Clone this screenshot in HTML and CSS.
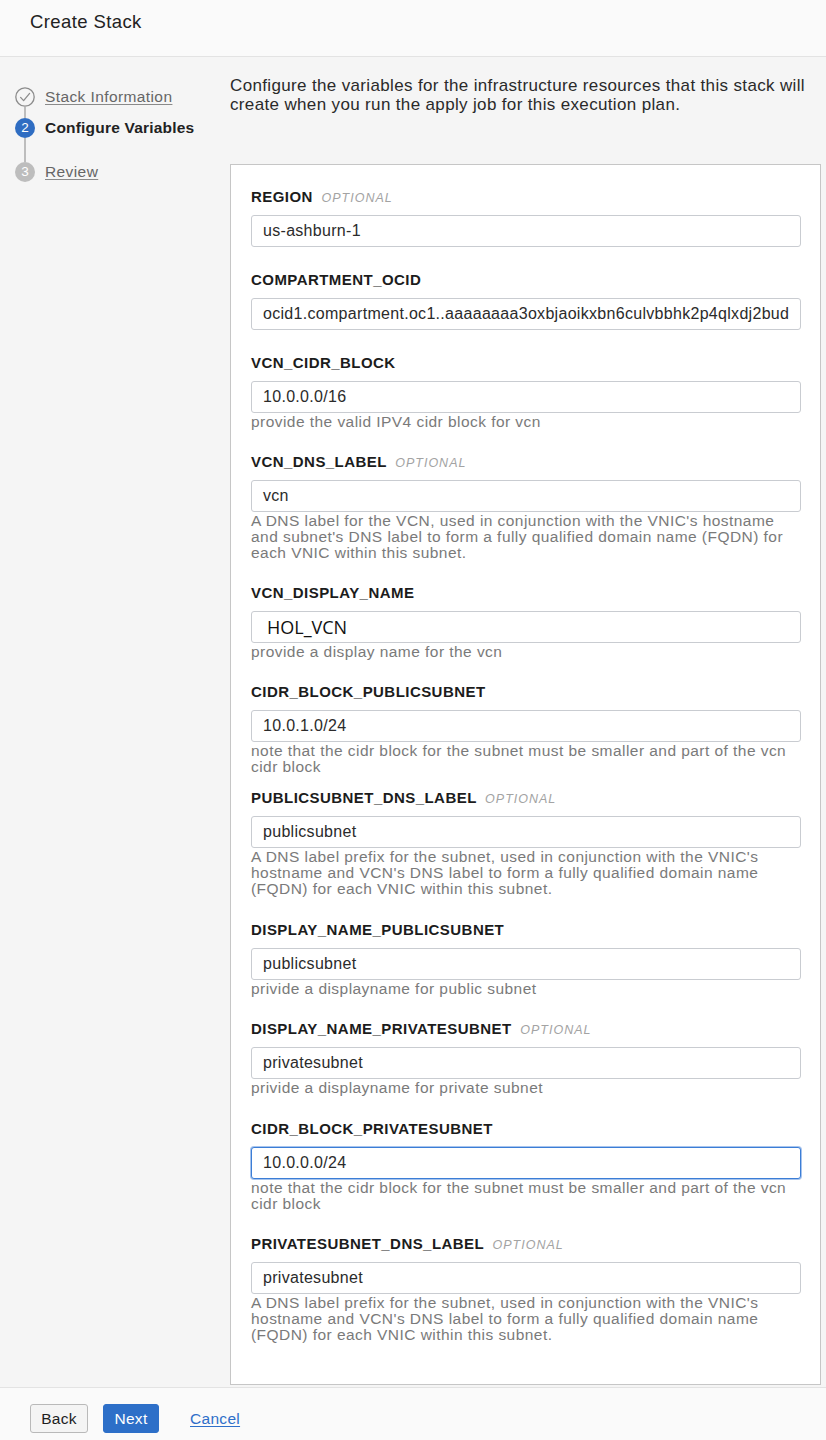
FILE: index.html
```html
<!DOCTYPE html>
<html lang="en">
<head>
<meta charset="utf-8">
<title>Create Stack</title>
<link rel="stylesheet" href="styles.css">
</head>
<body>
<header class="topbar">
  <h1 class="title">Create Stack</h1>
</header>
<div class="layout">
  <nav class="steps">
    <div class="step">
      <svg class="step-icon" viewBox="0 0 20 20" width="20" height="20" aria-hidden="true">
        <circle cx="10" cy="10" r="9.2" fill="none" stroke="#8c8c8c" stroke-width="1.3"/>
        <path d="M5.6 10.4 L8.6 13.6 L14.6 6.4" fill="none" stroke="#8c8c8c" stroke-width="1.3" stroke-linecap="round" stroke-linejoin="round"/>
      </svg>
      <a class="step-link" href="#">Stack Information</a>
    </div>
    <div class="connector short"></div>
    <div class="step">
      <span class="step-num current">2</span>
      <span class="step-current">Configure Variables</span>
    </div>
    <div class="connector long"></div>
    <div class="step">
      <span class="step-num todo">3</span>
      <a class="step-link" href="#">Review</a>
    </div>
  </nav>
  <main class="content">
    <p class="intro">Configure the variables for the infrastructure resources that this stack will create when you run the apply job for this execution plan.</p>
    <section class="panel">
      <div class="field">
        <div class="label">REGION <span class="optional">OPTIONAL</span></div>
        <div class="input">us-ashburn-1</div>
      </div>
      <div class="field">
        <div class="label">COMPARTMENT_OCID</div>
        <div class="input">ocid1.compartment.oc1..aaaaaaaa3oxbjaoikxbn6culvbbhk2p4qlxdj2bud</div>
      </div>
      <div class="field has-help">
        <div class="label">VCN_CIDR_BLOCK</div>
        <div class="input">10.0.0.0/16</div>
        <p class="help">provide the valid IPV4 cidr block for vcn</p>
      </div>
      <div class="field has-help">
        <div class="label">VCN_DNS_LABEL <span class="optional">OPTIONAL</span></div>
        <div class="input">vcn</div>
        <p class="help">A DNS label for the VCN, used in conjunction with the VNIC's hostname and subnet's DNS label to form a fully qualified domain name (FQDN) for each VNIC within this subnet.</p>
      </div>
      <div class="field has-help">
        <div class="label">VCN_DISPLAY_NAME</div>
        <div class="input pasted">HOL_VCN</div>
        <p class="help">provide a display name for the vcn</p>
      </div>
      <div class="field has-help tight">
        <div class="label">CIDR_BLOCK_PUBLICSUBNET</div>
        <div class="input">10.0.1.0/24</div>
        <p class="help">note that the cidr block for the subnet must be smaller and part of the vcn cidr block</p>
      </div>
      <div class="field has-help loose">
        <div class="label">PUBLICSUBNET_DNS_LABEL <span class="optional">OPTIONAL</span></div>
        <div class="input">publicsubnet</div>
        <p class="help">A DNS label prefix for the subnet, used in conjunction with the VNIC's hostname and VCN's DNS label to form a fully qualified domain name (FQDN) for each VNIC within this subnet.</p>
      </div>
      <div class="field has-help">
        <div class="label">DISPLAY_NAME_PUBLICSUBNET</div>
        <div class="input">publicsubnet</div>
        <p class="help">privide a displayname for public subnet</p>
      </div>
      <div class="field has-help loose">
        <div class="label">DISPLAY_NAME_PRIVATESUBNET <span class="optional">OPTIONAL</span></div>
        <div class="input">privatesubnet</div>
        <p class="help">privide a displayname for private subnet</p>
      </div>
      <div class="field has-help">
        <div class="label">CIDR_BLOCK_PRIVATESUBNET</div>
        <div class="input focused">10.0.0.0/24</div>
        <p class="help">note that the cidr block for the subnet must be smaller and part of the vcn cidr block</p>
      </div>
      <div class="field has-help last">
        <div class="label">PRIVATESUBNET_DNS_LABEL <span class="optional">OPTIONAL</span></div>
        <div class="input">privatesubnet</div>
        <p class="help">A DNS label prefix for the subnet, used in conjunction with the VNIC's hostname and VCN's DNS label to form a fully qualified domain name (FQDN) for each VNIC within this subnet.</p>
      </div>
    </section>
  </main>
</div>
<footer class="actions">
  <button class="btn btn-secondary" type="button">Back</button>
  <button class="btn btn-primary" type="button">Next</button>
  <a class="cancel" href="#">Cancel</a>
</footer>
</body>
</html>
```
FILE: styles.css
```css
* { box-sizing: border-box; }

html, body {
  margin: 0;
  padding: 0;
}

body {
  width: 826px;
  height: 1440px;
  background: #f5f5f5;
  font-family: "Liberation Sans", Arial, sans-serif;
  color: #1f1f1f;
  display: flex;
  flex-direction: column;
  overflow: hidden;
}

.topbar {
  height: 57px;
  flex: none;
  background: #fafafa;
  border-bottom: 1px solid #e3e3e3;
  padding: 11px 30px 0 30px;
}

.title {
  margin: 0;
  font-size: 18.5px;
  line-height: 22px;
  font-weight: normal;
  letter-spacing: 0.4px;
  color: #222;
}

.layout {
  display: flex;
  flex: 1;
  min-height: 0;
}

/* ---------- steps ---------- */
.steps {
  width: 230px;
  flex: none;
  padding: 30px 0 0 15px;
  display: flex;
  flex-direction: column;
}

.step {
  display: flex;
  align-items: center;
  gap: 10px;
  height: 20px;
}

.step-icon { display: block; flex: none; }

.step-num {
  width: 20px;
  height: 20px;
  border-radius: 50%;
  flex: none;
  display: flex;
  align-items: center;
  justify-content: center;
  color: #fff;
  font-size: 13.5px;
  line-height: 1;
}

.step-num.current { background: #2f6dc2; }
.step-num.todo { background: #bdbdbd; }

.connector {
  width: 2px;
  margin-left: 9px;
  background: #bdbdbd;
}
.connector.short { height: 11px; }
.connector.long { height: 24px; }

.step-link {
  font-size: 15.5px;
  letter-spacing: 0.4px;
  color: #666;
  text-decoration: underline;
  text-decoration-color: #8a8a8a;
  text-underline-offset: 2px;
}

.step-current {
  font-size: 15.5px;
  letter-spacing: 0.2px;
  font-weight: bold;
  color: #222;
}

/* ---------- content ---------- */
.content {
  flex: 1;
  padding: 19px 5px 0 0;
  display: flex;
  flex-direction: column;
}

.intro {
  margin: 0 0 50px 0;
  font-size: 17px;
  letter-spacing: 0.35px;
  line-height: 19px;
  color: #2a2a2a;
}

.panel {
  background: #fff;
  border: 1px solid #c6c6c6;
  padding: 24px 19px 41px 20px;
}

.field { margin-bottom: 25px; }
.field.has-help { margin-bottom: 24px; }
.field.tight { margin-bottom: 15px; }
.field.loose { margin-bottom: 25px; }
.field.last { margin-bottom: 0; }

.label {
  height: 16px;
  line-height: 16px;
  margin-bottom: 10px;
  font-size: 15px;
  font-weight: bold;
  letter-spacing: 0.45px;
  color: #1c1c1c;
  white-space: nowrap;
}

.optional {
  margin-left: 4px;
  font-size: 12.5px;
  font-weight: normal;
  font-style: italic;
  letter-spacing: 1px;
  color: #a3a3a3;
}

.input {
  height: 32px;
  border: 1px solid #c9ccd1;
  border-radius: 3px;
  padding: 0 11px;
  display: flex;
  align-items: center;
  font-size: 16px;
  letter-spacing: 0.3px;
  color: #2b2b2b;
  background: #fff;
  white-space: nowrap;
  overflow: hidden;
}

.input.pasted {
  padding-left: 15px;
  font-family: "Open Sans", "Liberation Sans", sans-serif;
  font-size: 18px;
  letter-spacing: 0;
  color: #111;
}

.input.focused {
  border-color: #3b7dd6;
  box-shadow: 0 0 0 1px rgba(59, 125, 214, 0.45);
}

.help {
  margin: 1px 0 0 0;
  font-size: 15.5px;
  line-height: 16px;
  letter-spacing: 0.45px;
  color: #7a7a7a;
}

/* ---------- footer ---------- */
.actions {
  height: 53px;
  flex: none;
  background: #fafafa;
  border-top: 1px solid #e3e3e3;
  padding: 16px 30px 0 30px;
  display: flex;
  align-items: flex-start;
  gap: 15px;
}

.btn {
  height: 29px;
  border-radius: 3px;
  font-family: "Liberation Sans", Arial, sans-serif;
  font-size: 15.5px;
  letter-spacing: 0.3px;
  padding: 0 10px;
  margin: 0;
  cursor: pointer;
}

.btn-secondary {
  width: 58px;
  background: #f4f4f4;
  border: 1px solid #b9b9b9;
  color: #1e1e1e;
}

.btn-primary {
  width: 56px;
  background: #2d6fc8;
  border: 1px solid #2d6fc8;
  color: #fff;
}

.cancel {
  margin-left: 16px;
  line-height: 29px;
  font-size: 15.5px;
  letter-spacing: 0.3px;
  color: #2e6fc9;
  text-decoration: underline;
  text-underline-offset: 2px;
}
```
